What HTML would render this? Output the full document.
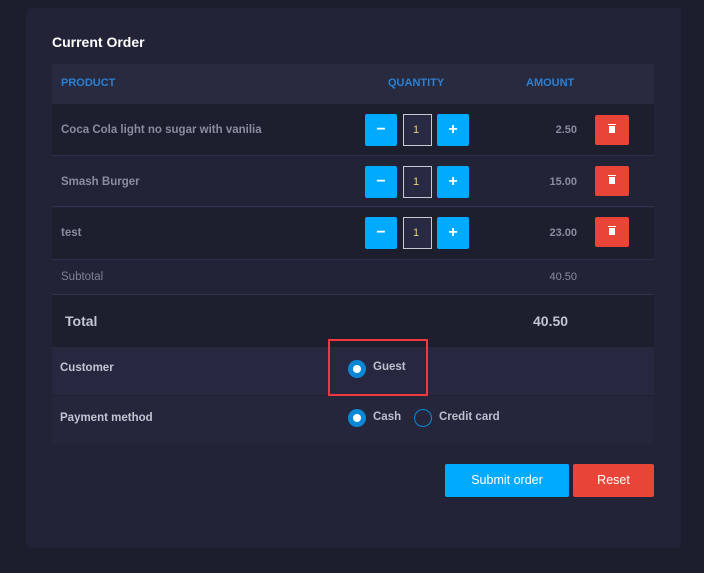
<!DOCTYPE html>
<html><head><style>
*{margin:0;padding:0;box-sizing:border-box}
body{width:704px;height:573px;background:#1c1d2d;font-family:"Liberation Sans",sans-serif;position:relative;overflow:hidden}
.card{position:absolute;left:26px;top:8px;width:655px;height:540px;background:#222336;border-radius:4px}
.a{position:absolute}
.row{position:absolute;left:52px;width:602px}
.t{position:absolute;font-size:11.5px;color:#8a8ca0;font-weight:bold}
.h{color:#2d7fd0;font-weight:bold;font-size:11px;position:absolute;top:77px}
.btn{position:absolute;width:32px;height:32px;background:#00aaff;border-radius:2px;color:#fff;font-weight:bold;font-size:16px;text-align:center;line-height:31px}
.inp{position:absolute;width:29px;height:32px;border:1px solid #c8c8d0;background:#282a44;color:#e8d080;font-size:11px;padding:9px 0 0 9px}
.del{position:absolute;left:595px;width:34px;height:30px;background:#e84438;border-radius:2px}
.del i{position:absolute;left:14px;top:11px;width:6px;height:7px;background:#fff}
.del b{position:absolute;left:13px;top:9px;width:8px;height:1px;background:#fff}
.amt{position:absolute;right:127px;font-size:11px;color:#8a8ca0;font-weight:bold}
.lbl{position:absolute;left:60px;font-size:11.5px;color:#c2c4d4;font-weight:bold}
.rad{position:absolute;width:18px;height:18px;border-radius:50%;background:#0a88d6}
.rad:after{content:"";position:absolute;left:5px;top:5px;width:8px;height:8px;border-radius:50%;background:#fff}
.ro{position:absolute;width:18px;height:18px;border-radius:50%;border:1.5px solid #0a88d6}
.rt{position:absolute;font-size:11.5px;color:#bdbfcf;font-weight:bold}
</style></head><body>
<div class="card"></div>
<div class="a" style="left:52px;top:34px;color:#fff;font-weight:bold;font-size:14px">Current Order</div>
<div class="row" style="top:64px;height:40px;background:#282a40"></div>
<div class="h" style="left:61px">PRODUCT</div>
<div class="h" style="left:388px">QUANTITY</div>
<div class="h" style="left:526px">AMOUNT</div>

<div class="row" style="top:104px;height:52px;background:#1d1e2e;border-bottom:1px solid #30314e"></div>
<div class="row" style="top:157px;height:50px;background:#222336;border-bottom:1px solid #30314e"></div>
<div class="row" style="top:208px;height:52px;background:#1d1e2e;border-bottom:1px solid #30314e"></div>
<div class="row" style="top:261px;height:34px;background:#222336;border-bottom:1px solid #30314e"></div>
<div class="row" style="top:295px;height:52px;background:#1d1e2e"></div>
<div class="row" style="top:347px;height:49px;background:#272840;border-bottom:1px solid #1e1f30"></div>
<div class="row" style="top:396px;height:48px;background:#25263c"></div>

<div class="t" style="left:61px;top:124px">Coca Cola light no sugar with vanilia</div>
<div class="t" style="left:61px;top:176px">Smash Burger</div>
<div class="t" style="left:61px;top:227px">test</div>

<div class="btn" style="left:365px;top:114px">−</div><div class="inp" style="left:403px;top:114px">1</div><div class="btn" style="left:437px;top:114px">+</div>
<div class="btn" style="left:365px;top:166px">−</div><div class="inp" style="left:403px;top:166px">1</div><div class="btn" style="left:437px;top:166px">+</div>
<div class="btn" style="left:365px;top:217px">−</div><div class="inp" style="left:403px;top:217px">1</div><div class="btn" style="left:437px;top:217px">+</div>

<div class="amt" style="top:124px">2.50</div>
<div class="amt" style="top:176px">15.00</div>
<div class="amt" style="top:227px">23.00</div>
<div class="del" style="top:115px"><b></b><i></i></div>
<div class="del" style="top:166px"><b></b><i></i></div>
<div class="del" style="top:217px"><b></b><i></i></div>

<div class="t" style="left:61px;top:271px;font-weight:normal;color:#7e8096">Subtotal</div>
<div class="amt" style="top:271px;font-weight:normal">40.50</div>
<div class="a" style="left:65px;top:313px;font-size:14px;font-weight:bold;color:#c2c4d4">Total</div>
<div class="a" style="left:533px;top:313px;font-size:14px;font-weight:bold;color:#c2c4d4">40.50</div>

<div class="lbl" style="top:362px">Customer</div>
<div class="lbl" style="top:412px">Payment method</div>
<div class="a" style="left:328px;top:339px;width:100px;height:57px;border:2px solid #f0383e"></div>
<div class="rad" style="left:348px;top:360px"></div><div class="rt" style="left:373px;top:361px">Guest</div>
<div class="rad" style="left:348px;top:409px"></div><div class="rt" style="left:373px;top:411px">Cash</div>
<div class="ro" style="left:414px;top:409px"></div><div class="rt" style="left:439px;top:411px">Credit card</div>

<div class="a" style="left:445px;top:464px;width:124px;height:33px;background:#00aaff;border-radius:2px;color:#fff;font-size:12.5px;text-align:center;line-height:33px">Submit order</div>
<div class="a" style="left:573px;top:464px;width:81px;height:33px;background:#e84438;border-radius:2px;color:#fff;font-size:12.5px;text-align:center;line-height:33px">Reset</div>
</body></html>
